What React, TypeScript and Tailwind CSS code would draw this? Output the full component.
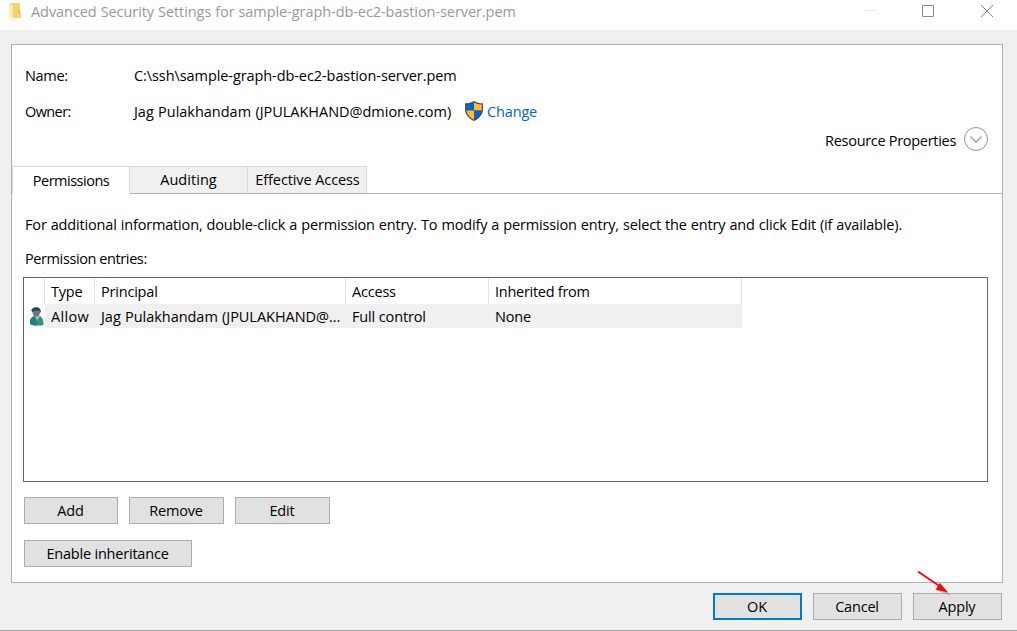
import type { ReactNode } from "react";

function Button({ children, className = "" }: { children: ReactNode; className?: string }) {
  return (
    <button className={`h-[27px] shrink-0 border border-[#adadad] bg-[#e1e1e1] pr-px pt-px leading-none ${className}`}>
      {children}
    </button>
  );
}

function FolderIcon() {
  return (
    <svg width="13" height="18" viewBox="0 0 13 18" className="shrink-0">
      <path d="M1 0h10v9l1 1v5H1z" fill="#f8d16f" />
      <path d="M0 0h2l2 3v14L0 15z" fill="#ffeaa6" />
      <path d="M9 7h2v3H9z" fill="#edba4c" />
    </svg>
  );
}

function ShieldIcon() {
  return (
    <svg width="18" height="20" viewBox="0 0 18 20" className="-mt-px shrink-0">
      <path d="M9 0C6.500 1.500 3.500 2.300 0 2.300V8c0 5 3 9.300 9 12 6-2.700 9-7 9-12V2.300C14.500 2.300 11.500 1.500 9 0z" fill="#4b4b4b" />
      <path d="M9 1.400C7 2.600 4.500 3.300 1.200 3.500V9.500H9z" fill="#0a63c7" />
      <path d="M9 1.400c2 1.200 4.500 1.900 7.800 2.100V9.500H9z" fill="#ffc034" />
      <path d="M1.400 9.500C1.900 13.500 4.600 16.600 9 18.700V9.500z" fill="#ffc034" />
      <path d="M16.600 9.500c-.5 4-3.200 7.100-7.600 9.200V9.500z" fill="#0a63c7" />
    </svg>
  );
}

function PersonIcon() {
  return (
    <svg width="14" height="19" viewBox="0 0 14 19" className="shrink-0">
      <path d="M0 15.500C0 11.500 2 9.500 5 9h4c3 .5 4.500 3 4.500 9-4 1-10 .8-13.500-1z" fill="#339083" />
      <path d="M0 15.500C0 12 2 9.500 4.500 9.200L7 18.500c-3 0-5-.5-7-1.500z" fill="#287c78" />
      <path d="M4.500 8h4.500v2.500L7 13z" fill="#b5c8c5" />
      <ellipse cx="6.300" cy="5.200" rx="3.700" ry="4.600" fill="#6d7778" />
      <path d="M1.300 4C1.500 1.500 3.500.3 6 .3c3 0 5.200 1.700 4.800 5.700L9 3.500H5L3 5z" fill="#244565" />
    </svg>
  );
}

export default function App() {
  return (
    <div className="flex h-[631px] w-[1017px] flex-col overflow-hidden whitespace-nowrap border-b border-[#aaaaaa] bg-[#f0f0f0] font-['Open_Sans','Noto_Sans',sans-serif] text-[14.5px] leading-5 text-black">
      <header className="flex h-[30px] shrink-0 items-start bg-white pl-[9px] text-[#999999]">
        <div className="pt-[3px]"><FolderIcon /></div>
        <span className="ml-[9px] mt-[2px] tracking-[-0.07px] [word-spacing:0.3px]">Advanced Security Settings for sample-graph-db-ec2-bastion-server.pem</span>
        <svg width="130" height="14" viewBox="0 0 130 14" fill="none" className="ml-auto mr-6 mt-1">
          <path d="M1 6.500h12" stroke="#e5e5e5" />
          <path d="M59.500 1.500h11v11h-11z" stroke="#888888" />
          <path d="m118 1 12 12m0-12-12 12" stroke="#888888" />
        </svg>
      </header>

      <main className="ml-[11px] mt-[14px] flex h-[539px] w-[992px] shrink-0 flex-col border border-[#b0b0b0] bg-white">
        <section className="flex h-[121px] shrink-0 flex-col pt-[21px]">
          <div className="flex pl-[13px]">
            <span className="w-[109px] tracking-[-0.3px]">Name:</span>
            <span className="tracking-[-0.08px]">C:\ssh\sample-graph-db-ec2-bastion-server.pem</span>
          </div>
          <div className="mt-4 flex pl-[13px]">
            <span className="w-[109px] tracking-[-0.6px]">Owner:</span>
            <span className="w-[331px] tracking-[-0.02px] [word-spacing:0.6px]">Jag Pulakhandam (JPULAKHAND@dmione.com)</span>
            <ShieldIcon />
            <a className="ml-1 tracking-[-0.15px] text-[#0066cc]">Change</a>
          </div>
          <div className="mt-[4px] flex items-start justify-end pr-[13px]">
            <span className="mr-[7px] mt-[5px] tracking-[-0.3px]">Resource Properties</span>
            <svg width="26" height="26" viewBox="0 0 26 26" fill="none" className="shrink-0">
              <circle cx="13" cy="13" r="11.500" stroke="#909090" />
              <path d="m7.500 10.500 5.500 5.500 5.500-5.500" stroke="#aaaaaa" strokeWidth="1.700" />
            </svg>
          </div>
        </section>

        <nav className="flex h-[28px] shrink-0">
          <div className="w-[118px] border-x border-t border-[#d9d9d9] bg-white pt-[4px] text-center tracking-[-0.5px]">Permissions</div>
          <div className="w-[118px] border-b border-r border-t border-b-[#b0b0b0] border-r-[#d9d9d9] border-t-[#d9d9d9] bg-[#f0f0f0] pt-[3px] text-center tracking-[0.05px]">Auditing</div>
          <div className="w-[119px] border-b border-r border-t border-b-[#b0b0b0] border-r-[#d9d9d9] border-t-[#d9d9d9] bg-[#f0f0f0] pl-px pt-[3px] text-center tracking-[-0.1px]">Effective Access</div>
          <div className="grow border-b border-[#b0b0b0]" />
        </nav>

        <p className="ml-[13px] mt-[21px] tracking-[-0.165px] [word-spacing:0.45px]">For additional information, double-click a permission entry. To modify a permission entry, select the entry and click Edit (if available).</p>
        <p className="ml-[13px] mt-[14px] tracking-[-0.4px]">Permission entries:</p>

        <div className="ml-[11px] mt-[8px] h-[205px] w-[965px] shrink-0 border border-[#646464] tracking-[-0.2px]">
          <div className="grid h-[26px] w-[718px] grid-cols-[21px_50px_251px_143px_253px] *:border-r *:border-[#e3e3e3] *:pl-[6px] *:pt-[4px]">
            <span />
            <span>Type</span>
            <span>Principal</span>
            <span>Access</span>
            <span className="tracking-[-0.27px]">Inherited from</span>
          </div>
          <div className="flex h-6 w-[718px]">
            <div className="w-[21px] pl-[6px] pt-[3px]"><PersonIcon /></div>
            <div className="grid grow grid-cols-[50px_251px_143px_253px] bg-[#f0f0f0] *:pl-[6px] *:pt-[3px]">
              <span className="tracking-[0.3px]">Allow</span>
              <span className="tracking-[-0.03px] [word-spacing:0.5px]">Jag Pulakhandam (JPULAKHAND@...</span>
              <span className="tracking-[-0.14px]">Full control</span>
              <span>None</span>
            </div>
          </div>
        </div>

        <div className="ml-3 mt-[15px] flex gap-[11px] tracking-[-0.2px]">
          <Button className="w-[94px]">Add</Button>
          <Button className="w-[95px]">Remove</Button>
          <Button className="w-[95px]">Edit</Button>
        </div>
        <div className="ml-3 mt-4 flex tracking-[-0.2px]">
          <Button className="w-[168px]">Enable inheritance</Button>
        </div>
      </main>

      <footer className="mr-[15px] mt-[10px] flex justify-end gap-[11px] tracking-[-0.2px]">
        <Button className="w-[89px] outline-2 -outline-offset-2 outline-[#0078d7]">OK</Button>
        <Button className="w-[89px]">Cancel</Button>
        <div className="relative flex">
          <Button className="w-[89px]">Apply</Button>
          <svg width="36" height="28" viewBox="0 0 36 28" className="absolute -top-[23px] left-[3px]">
            <path d="m3 3 24 16" stroke="#777777" strokeWidth="1.500" opacity=".35" />
            <path d="m24 14-4 6 15 6z" fill="#777777" opacity=".45" />
            <path d="m2 1.500 23 15.500" stroke="#f00b0b" strokeWidth="1.700" />
            <path d="m24 13-4.500 6.500L32 22.500z" fill="#f00b0b" />
          </svg>
        </div>
      </footer>
    </div>
  );
}
